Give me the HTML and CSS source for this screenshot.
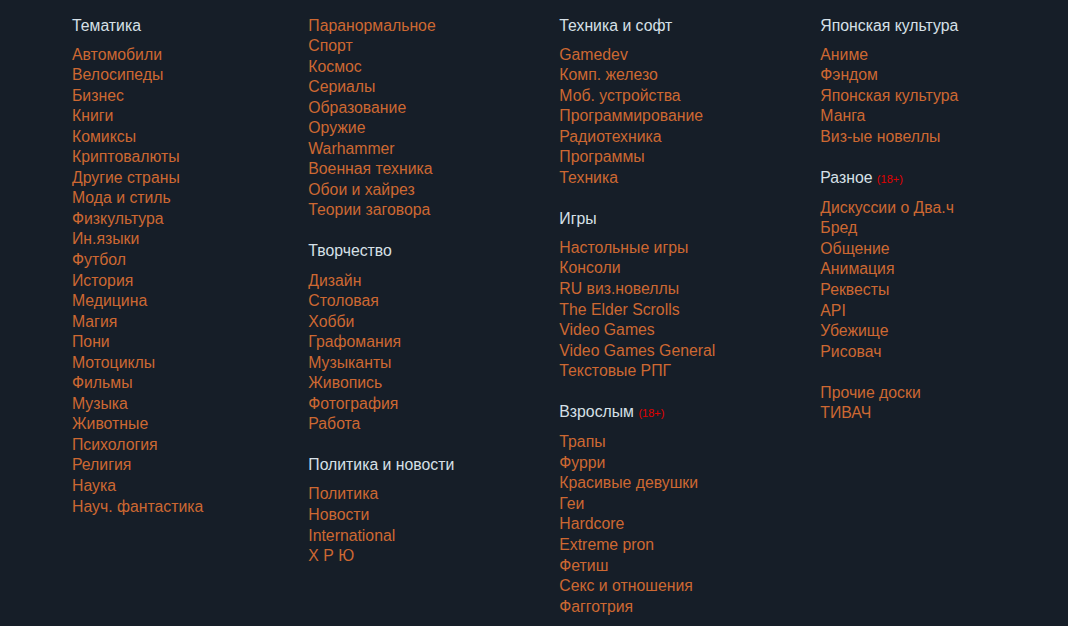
FILE: index.html
```html
<!DOCTYPE html>
<html lang="ru">
  <head>
    <meta charset="UTF-8" />
    <meta name="viewport" content="width=device-width, initial-scale=1.0" />
    <title>Доски</title>
    <link rel="stylesheet" href="styles.css">
  </head>
  <body>
    <div class="boards">
      <div class="col">
        <div class="group">
          <div class="group-title">Тематика</div>
          <a href="#">Автомобили</a>
          <a href="#">Велосипеды</a>
          <a href="#">Бизнес</a>
          <a href="#">Книги</a>
          <a href="#">Комиксы</a>
          <a href="#">Криптовалюты</a>
          <a href="#">Другие страны</a>
          <a href="#">Мода и стиль</a>
          <a href="#">Физкультура</a>
          <a href="#">Ин.языки</a>
          <a href="#">Футбол</a>
          <a href="#">История</a>
          <a href="#">Медицина</a>
          <a href="#">Магия</a>
          <a href="#">Пони</a>
          <a href="#">Мотоциклы</a>
          <a href="#">Фильмы</a>
          <a href="#">Музыка</a>
          <a href="#">Животные</a>
          <a href="#">Психология</a>
          <a href="#">Религия</a>
          <a href="#">Наука</a>
          <a href="#">Науч. фантастика</a>
        </div>
      </div>

      <div class="col">
        <div class="group">
          <a href="#">Паранормальное</a>
          <a href="#">Спорт</a>
          <a href="#">Космос</a>
          <a href="#">Сериалы</a>
          <a href="#">Образование</a>
          <a href="#">Оружие</a>
          <a href="#">Warhammer</a>
          <a href="#">Военная техника</a>
          <a href="#">Обои и хайрез</a>
          <a href="#">Теории заговора</a>
        </div>
        <div class="group">
          <div class="group-title">Творчество</div>
          <a href="#">Дизайн</a>
          <a href="#">Столовая</a>
          <a href="#">Хобби</a>
          <a href="#">Графомания</a>
          <a href="#">Музыканты</a>
          <a href="#">Живопись</a>
          <a href="#">Фотография</a>
          <a href="#">Работа</a>
        </div>
        <div class="group">
          <div class="group-title">Политика и новости</div>
          <a href="#">Политика</a>
          <a href="#">Новости</a>
          <a href="#">International</a>
          <a href="#">Х Р Ю</a>
        </div>
      </div>

      <div class="col">
        <div class="group">
          <div class="group-title">Техника и софт</div>
          <a href="#">Gamedev</a>
          <a href="#">Комп. железо</a>
          <a href="#">Моб. устройства</a>
          <a href="#">Программирование</a>
          <a href="#">Радиотехника</a>
          <a href="#">Программы</a>
          <a href="#">Техника</a>
        </div>
        <div class="group">
          <div class="group-title">Игры</div>
          <a href="#">Настольные игры</a>
          <a href="#">Консоли</a>
          <a href="#">RU виз.новеллы</a>
          <a href="#">The Elder Scrolls</a>
          <a href="#">Video Games</a>
          <a href="#">Video Games General</a>
          <a href="#">Текстовые РПГ</a>
        </div>
        <div class="group">
          <div class="group-title">Взрослым <span class="adult">(18+)</span></div>
          <a href="#">Трапы</a>
          <a href="#">Фурри</a>
          <a href="#">Красивые девушки</a>
          <a href="#">Геи</a>
          <a href="#">Hardcore</a>
          <a href="#">Extreme pron</a>
          <a href="#">Фетиш</a>
          <a href="#">Секс и отношения</a>
          <a href="#">Фагготрия</a>
        </div>
      </div>

      <div class="col">
        <div class="group">
          <div class="group-title">Японская культура</div>
          <a href="#">Аниме</a>
          <a href="#">Фэндом</a>
          <a href="#">Японская культура</a>
          <a href="#">Манга</a>
          <a href="#">Виз-ые новеллы</a>
        </div>
        <div class="group">
          <div class="group-title">Разное <span class="adult">(18+)</span></div>
          <a href="#">Дискуссии о Два.ч</a>
          <a href="#">Бред</a>
          <a href="#">Общение</a>
          <a href="#">Анимация</a>
          <a href="#">Реквесты</a>
          <a href="#">API</a>
          <a href="#">Убежище</a>
          <a href="#">Рисовач</a>
        </div>
        <div class="group">
          <a href="#">Прочие доски</a>
          <a href="#">ТИВАЧ</a>
        </div>
      </div>
    </div>
  </body>
</html>
```

FILE: styles.css
```css
body {
  margin: 0;
  background-color: #161e28;
  font-family: "Liberation Sans", Arial, sans-serif;
  font-size: 15.8px;
}
.boards {
  display: flex;
  gap: 105px;
  padding: 15.5px 0 0 72px;
}
.col {
  display: flex;
  flex-direction: column;
}
.group {
  display: flex;
  flex-direction: column;
  margin-bottom: 20.5px;
}
.group a {
  color: #cd6832;
  text-decoration: none;
  line-height: 20.54px;
}
.group-title {
  color: #d6e0e7;
  line-height: 20.54px;
  margin-bottom: 8.5px;
}
.adult {
  color: #e00000;
  font-size: 11px;
}
```
